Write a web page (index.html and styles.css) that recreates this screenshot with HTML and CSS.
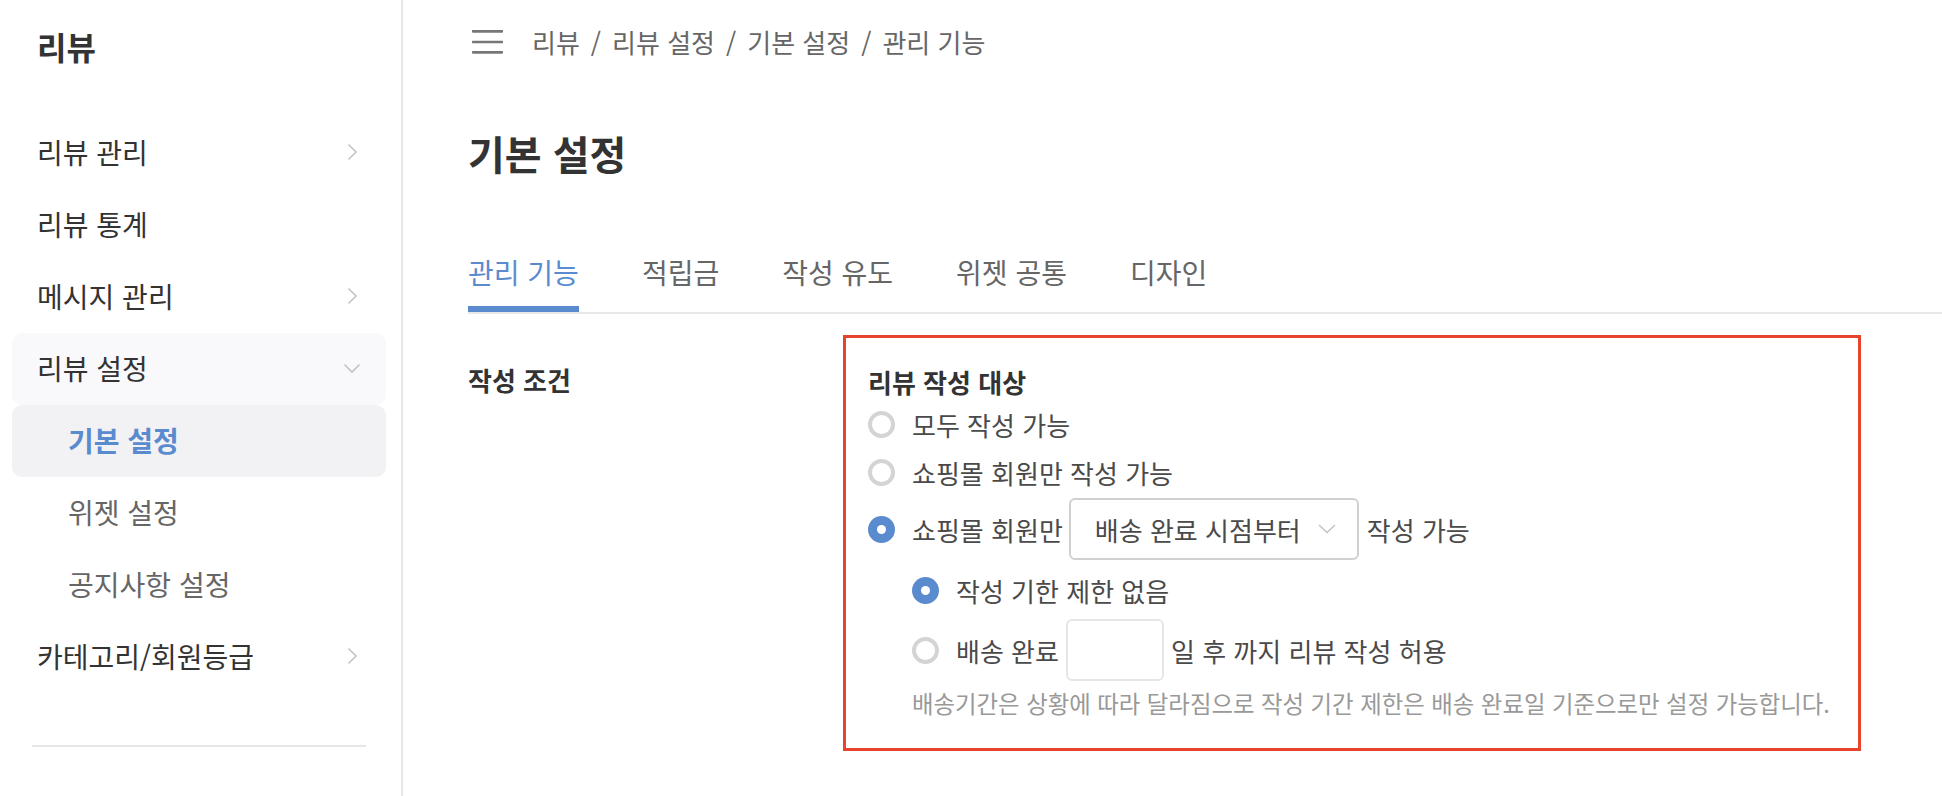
FILE: index.html
```html
<!DOCTYPE html>
<html lang="ko">
<head>
    <meta charset="utf-8">
    <title>리뷰 - 기본 설정</title>
    <link rel="stylesheet" href="styles.css">
</head>
<body>
    <div class="layout">
        <aside class="sidebar">
            <div class="sidebar-title">리뷰</div>
            <ul class="nav">
                <li class="nav-item">
                    <span>리뷰 관리</span>
                    <span class="nav-icon"><svg width="11" height="18" viewBox="0 0 11 18"><path d="M1.5 1.5 L9 9 L1.5 16.5" fill="none" stroke="#c4c4c4" stroke-width="1.6"/></svg></span>
                </li>
                <li class="nav-item"><span>리뷰 통계</span></li>
                <li class="nav-item">
                    <span>메시지 관리</span>
                    <span class="nav-icon"><svg width="11" height="18" viewBox="0 0 11 18"><path d="M1.5 1.5 L9 9 L1.5 16.5" fill="none" stroke="#c4c4c4" stroke-width="1.6"/></svg></span>
                </li>
                <li class="nav-item open">
                    <span>리뷰 설정</span>
                    <span class="nav-icon"><svg width="18" height="11" viewBox="0 0 18 11"><path d="M1.5 1.5 L9 9 L16.5 1.5" fill="none" stroke="#c4c4c4" stroke-width="1.6"/></svg></span>
                </li>
                <li class="nav-item nav-sub active"><span>기본 설정</span></li>
                <li class="nav-item nav-sub"><span>위젯 설정</span></li>
                <li class="nav-item nav-sub"><span>공지사항 설정</span></li>
                <li class="nav-item">
                    <span>카테고리/회원등급</span>
                    <span class="nav-icon"><svg width="11" height="18" viewBox="0 0 11 18"><path d="M1.5 1.5 L9 9 L1.5 16.5" fill="none" stroke="#c4c4c4" stroke-width="1.6"/></svg></span>
                </li>
            </ul>
            <hr class="sidebar-divider">
        </aside>

        <main class="main">
            <div class="topbar">
                <span class="menu-btn">
                    <svg width="31" height="24" viewBox="0 0 31 24"><path d="M1 1.3 H30 M1 12 H30 M1 22.3 H30" fill="none" stroke="#777" stroke-width="2.7" stroke-linecap="round"/></svg>
                </span>
                <nav class="breadcrumb">
                    <span>리뷰</span><span class="sep">/</span><span>리뷰 설정</span><span class="sep">/</span><span>기본 설정</span><span class="sep">/</span><span>관리 기능</span>
                </nav>
            </div>

            <h1 class="page-title">기본 설정</h1>

            <div class="tabs">
                <div class="tab active">관리 기능</div>
                <div class="tab">적립금</div>
                <div class="tab">작성 유도</div>
                <div class="tab">위젯 공통</div>
                <div class="tab">디자인</div>
            </div>

            <div class="form-row">
                <div class="form-label">작성 조건</div>
                <div class="form-box">
                    <div class="box-title">리뷰 작성 대상</div>
                    <div class="option">
                        <span class="radio"></span>
                        <span>모두 작성 가능</span>
                    </div>
                    <div class="option">
                        <span class="radio"></span>
                        <span>쇼핑몰 회원만 작성 가능</span>
                    </div>
                    <div class="option option-field option-select">
                        <span class="radio checked"></span>
                        <span>쇼핑몰 회원만</span>
                        <div class="select">
                            <span>배송 완료 시점부터</span>
                            <svg width="18" height="10" viewBox="0 0 18 10"><path d="M1 1 L9 8.5 L17 1" fill="none" stroke="#c2c2c2" stroke-width="1.4"/></svg>
                        </div>
                        <span>작성 가능</span>
                    </div>
                    <div class="sub-options">
                        <div class="option option-first">
                            <span class="radio checked"></span>
                            <span>작성 기한 제한 없음</span>
                        </div>
                        <div class="option option-field option-days">
                            <span class="radio"></span>
                            <span>배송 완료</span>
                            <div class="day-input"></div>
                            <span>일 후 까지 리뷰 작성 허용</span>
                        </div>
                        <p class="helper">배송기간은 상황에 따라 달라짐으로 작성 기간 제한은 배송 완료일 기준으로만 설정 가능합니다.</p>
                    </div>
                </div>
            </div>
        </main>
    </div>
</body>
</html>
```

FILE: styles.css
```css
* {
    box-sizing: border-box;
}
body {
    margin: 0;
    font-family: "Noto Sans CJK KR", "Noto Sans", sans-serif;
    color: #333333;
    background-color: #ffffff;
}
.layout {
    display: flex;
    min-height: 100vh;
}

/* sidebar */
.sidebar {
    width: 403px;
    flex-shrink: 0;
    border-right: 2px solid #e8e8e8;
    padding-top: 24px;
}
.sidebar-title {
    font-size: 32px;
    font-weight: 700;
    line-height: 44px;
    padding-left: 37px;
    color: #333333;
}
.nav {
    list-style: none;
    margin: 49px 15px 0 12px;
    padding: 0;
}
.nav-item {
    display: flex;
    align-items: center;
    justify-content: space-between;
    height: 72px;
    padding: 0 24px 2px 25px;
    font-size: 28px;
    color: #333333;
    border-radius: 10px;
}
.nav-item.open {
    background-color: #f9f9fb;
}
.nav-sub {
    padding-left: 56px;
    color: #666666;
}
.nav-sub.active {
    background-color: #f2f2f4;
    color: #5b8bcf;
    font-weight: 700;
}
.nav-icon {
    width: 20px;
    height: 20px;
    display: flex;
    align-items: center;
    justify-content: center;
}
.sidebar-divider {
    margin: 52px 35px 0 32px;
    border: 0;
    border-top: 2px solid #e6e6e6;
}

/* main */
.main {
    flex: 1;
    padding-left: 65px;
}
.topbar {
    height: 84px;
    display: flex;
    align-items: center;
}
.menu-btn {
    display: flex;
    margin-left: 4px;
    margin-right: 29px;
}
.breadcrumb {
    font-size: 26px;
    color: #666666;
    line-height: 34px;
}
.breadcrumb .sep {
    margin: 0 11px;
}
.page-title {
    margin: 44px 0 0;
    font-size: 40px;
    font-weight: 700;
    line-height: 50px;
    color: #333333;
}
.tabs {
    display: flex;
    gap: 63px;
    margin-top: 76px;
    border-bottom: 2px solid #e8e8e8;
}
.tab {
    font-size: 28px;
    line-height: 36px;
    padding-bottom: 22px;
    color: #666666;
}
.tab.active {
    color: #5b8bcf;
    box-shadow: inset 0 -6px 0 #5b8bcf;
}

/* form */
.form-row {
    display: flex;
    margin-top: 21px;
}
.form-label {
    width: 375px;
    padding-top: 27px;
    font-size: 26px;
    font-weight: 700;
    line-height: 36px;
    color: #333333;
}
.form-box {
    width: 1018px;
    border: 3px solid #e8432d;
    padding: 26px 20px 30px 22px;
}
.box-title {
    font-size: 26px;
    font-weight: 700;
    line-height: 36px;
    color: #333333;
}
.option {
    display: flex;
    align-items: center;
    height: 48px;
    font-size: 26px;
    color: #4a4a4a;
}
.option-field {
    height: 62px;
}
.option-select {
    margin-top: 2px;
}
.option-first {
    margin-top: 6px;
}
.option-days {
    margin-top: 5px;
}
.radio {
    width: 27px;
    height: 27px;
    border-radius: 50%;
    border: 4px solid #d4d4d4;
    margin-right: 17px;
    flex-shrink: 0;
    display: flex;
    align-items: center;
    justify-content: center;
}
.radio.checked {
    border: none;
    background-color: #5b8bcf;
}
.radio.checked::after {
    content: "";
    width: 9px;
    height: 9px;
    border-radius: 50%;
    background-color: #ffffff;
}
.select {
    width: 290px;
    height: 62px;
    margin: 0 8px 0 6px;
    padding: 0 21px 0 24px;
    display: flex;
    align-items: center;
    justify-content: space-between;
    border: 2px solid #d0d0d0;
    border-radius: 6px;
    color: #4a4a4a;
}
.sub-options {
    margin-left: 44px;
}
.day-input {
    width: 98px;
    height: 62px;
    margin: 0 7px;
    border: 2px solid #e6e6e6;
    border-radius: 6px;
}
.helper {
    margin: 7px 0 0;
    font-size: 23.4px;
    line-height: 30px;
    white-space: nowrap;
    color: #999999;
}
```
